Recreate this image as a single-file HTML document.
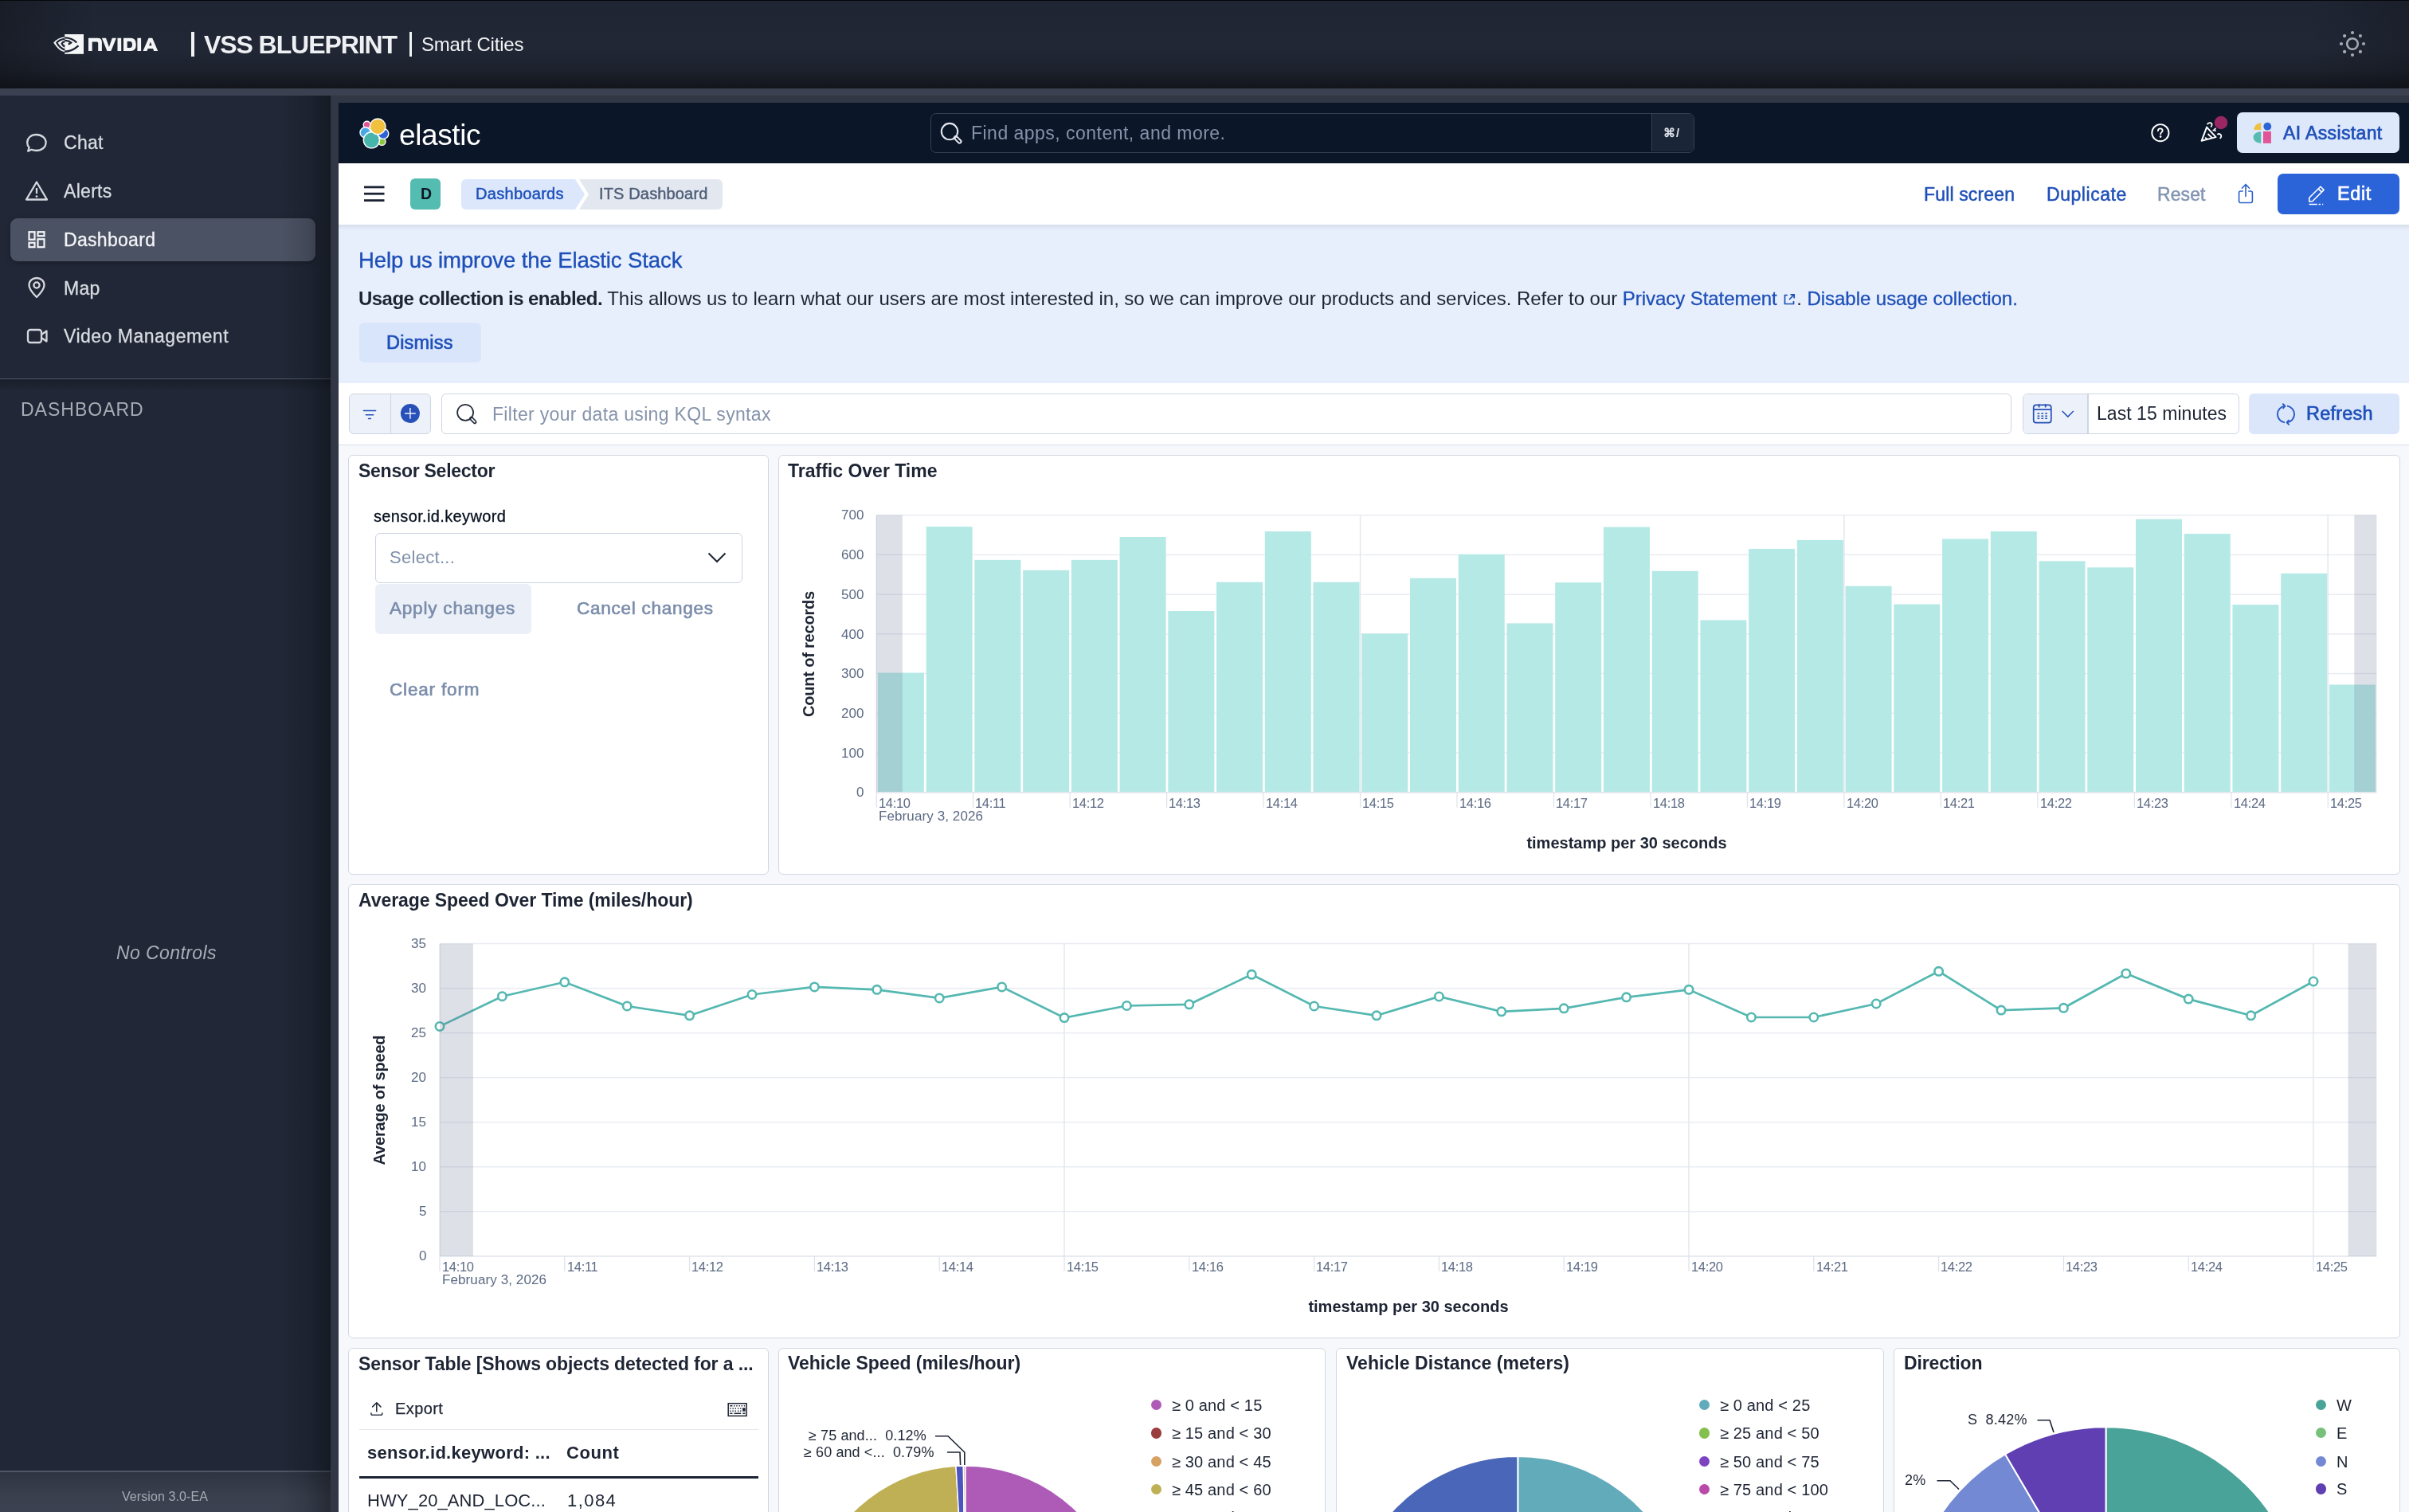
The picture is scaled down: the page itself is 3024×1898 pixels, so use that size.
<!DOCTYPE html>
<html><head><meta charset="utf-8"><title>VSS Blueprint - ITS Dashboard</title>
<style>
html,body{margin:0;padding:0;}
body{width:3024px;height:1898px;overflow:hidden;position:relative;background:#f6f8fc;font-family:"Liberation Sans",sans-serif;}
.t{position:absolute;white-space:nowrap;will-change:transform;}
.r{position:absolute;}
svg.r{overflow:visible;}
</style></head><body>
<div class="r" style="left:0.0px;top:0.0px;width:3024.0px;height:111.0px;background:linear-gradient(180deg,#1f2533 0%,#212735 55%,#1c212c 80%,#12151b 100%);"></div>
<div class="r" style="left:0.0px;top:0.0px;width:3024.0px;height:1.2px;background:#050608;"></div>
<div class="r" style="left:0.0px;top:0.0px;width:120.0px;height:111.0px;background:linear-gradient(90deg,rgba(10,12,16,0.35),rgba(10,12,16,0));"></div>
<svg class="r" style="left:60px;top:35px;" width="145" height="40" viewBox="0 0 145 40">
      <path d="M7.2 18.4 C11 14 16 11.8 21.2 11.5 V30 C16 29.8 11 24.5 7.2 18.4 Z" fill="#f4f5f7"/>
      <rect x="21.2" y="8" width="23.8" height="24.8" fill="#f4f5f7"/>
      <path d="M21.2 13.8 C16 14.5 12.5 17 11.3 18.6 C12.6 21.2 16 25.8 21.2 27.6" fill="none" stroke="#1f2533" stroke-width="2.3"/>
      <path d="M21.2 17.2 C19.2 17.6 18 18.6 17.6 19.7 C18.4 21.4 19.8 22.6 21.2 23.4" fill="none" stroke="#1f2533" stroke-width="2.3"/>
      <path d="M21.2 12.3 C28 12.3 33 15 36.2 18.5" fill="none" stroke="#1f2533" stroke-width="2.3"/>
      <path d="M38.5 22.3 C33 27.2 27 29.6 21.2 29.7" fill="none" stroke="#1f2533" stroke-width="2.4"/>
      <path d="M21.2 15.9 C25 15.9 27.6 17 29.2 18.6 L25.8 20.8" fill="none" stroke="#1f2533" stroke-width="2.3"/>
      <path fill="#f4f5f7" fill-rule="evenodd" d="M51 29 V12.8 H62.6 Q67.9 12.8 67.9 18 V29 H63.2 V19 Q63.2 17.4 61.6 17.4 H55.7 V29 Z
        M67.9 12.8 H73 L76.9 24 L80.8 12.8 H85.9 L79.4 29 H74.4 Z
        M87.5 12.8 H92.2 V29 H87.5 Z
        M95 12.8 H104 Q110.8 12.8 110.8 20.9 Q110.8 29 104 29 H95 Z M99.7 16.9 V24.9 H103.3 Q106 24.9 106 20.9 Q106 16.9 103.3 16.9 Z
        M112.4 12.8 H117.1 V29 H112.4 Z
        M119.5 29 L126.6 12.8 H131.2 L138.2 29 H133.2 L132 26 H125.7 L124.5 29 Z M127.1 22.3 H130.6 L128.85 17.6 Z"/>
    </svg>
<div class="r" style="left:240.0px;top:40.0px;width:3.5px;height:31.0px;background:#f2f3f5;"></div>
<div class="t " style="left:256.0px;top:39.9px;font-size:32px;line-height:32px;font-weight:700;color:#eef0f3;letter-spacing:-1.08px;">VSS BLUEPRINT</div>
<div class="r" style="left:513.5px;top:40.0px;width:3.5px;height:31.0px;background:#f2f3f5;"></div>
<div class="t " style="left:529.0px;top:44.2px;font-size:24px;line-height:24px;font-weight:400;color:#f2f3f5;letter-spacing:-0.2px;">Smart Cities</div>
<svg class="r" style="left:2930px;top:32px;" width="46" height="46" viewBox="0 0 46 46"><circle cx="23" cy="23" r="6.8" fill="none" stroke="#b9bcc4" stroke-width="2.6"/><circle cx="37.0" cy="23.0" r="2.1" fill="#b9bcc4"/><circle cx="32.9" cy="32.9" r="2.1" fill="#b9bcc4"/><circle cx="23.0" cy="37.0" r="2.1" fill="#b9bcc4"/><circle cx="13.1" cy="32.9" r="2.1" fill="#b9bcc4"/><circle cx="9.0" cy="23.0" r="2.1" fill="#b9bcc4"/><circle cx="13.1" cy="13.1" r="2.1" fill="#b9bcc4"/><circle cx="23.0" cy="9.0" r="2.1" fill="#b9bcc4"/><circle cx="32.9" cy="13.1" r="2.1" fill="#b9bcc4"/></svg>
<div class="r" style="left:2900.0px;top:0.0px;width:124.0px;height:111.0px;background:linear-gradient(90deg,rgba(10,12,16,0),rgba(10,12,16,0.25));"></div>
<div class="r" style="left:0.0px;top:111.0px;width:3024.0px;height:9.0px;background:#3b4150;"></div>
<div class="r" style="left:415.0px;top:120.0px;width:2609.0px;height:9.0px;background:#313744;"></div>
<div class="r" style="left:415.0px;top:120.0px;width:10.0px;height:1778.0px;background:#313744;"></div>
<div class="r" style="left:0.0px;top:120.0px;width:415.0px;height:1778.0px;background:#212736;"></div>
<div class="r" style="left:13.0px;top:274.0px;width:383.0px;height:54.0px;background:#4b5263;border-radius:9px;box-shadow:0 2px 6px rgba(0,0,0,0.25);"></div>
<svg class="r" style="left:30px;top:164px;" width="32" height="30" viewBox="0 0 32 30"><path d="M5.2 25.8 L6.6 21.2 C5 19.4 4.2 17.2 4.2 15 C4.2 9 9.2 5 15.6 5 C22 5 27.6 9 27.6 15 C27.6 21 22 25 15.6 25 C13.4 25 11.4 24.6 9.6 23.8 Z" fill="none" stroke="#d5d8de" stroke-width="2.3" stroke-linejoin="round"/></svg>
<div class="t " style="left:80.0px;top:167.8px;font-size:23px;line-height:23px;font-weight:400;color:#d9dce2;letter-spacing:0.3px;-webkit-text-stroke:0.3px #d9dce2;">Chat</div>
<svg class="r" style="left:30px;top:224px;" width="32" height="30" viewBox="0 0 32 30"><path d="M16 4.5 L29 26.5 H3 Z" fill="none" stroke="#d5d8de" stroke-width="2.3" stroke-linejoin="round"/><line x1="16" y1="12" x2="16" y2="19" stroke="#d5d8de" stroke-width="2.3"/><circle cx="16" cy="22.6" r="1.4" fill="#d5d8de"/></svg>
<div class="t " style="left:80.0px;top:228.5px;font-size:23px;line-height:23px;font-weight:400;color:#d9dce2;letter-spacing:0.3px;-webkit-text-stroke:0.3px #d9dce2;">Alerts</div>
<svg class="r" style="left:32px;top:287px;" width="28" height="28" viewBox="0 0 28 28"><rect x="4.5" y="4.2" width="7" height="9.5" fill="none" stroke="#f4f5f7" stroke-width="2.2"/><rect x="15.5" y="4.2" width="8" height="5" fill="none" stroke="#f4f5f7" stroke-width="2.2"/><rect x="4.5" y="17.7" width="7" height="5.5" fill="none" stroke="#f4f5f7" stroke-width="2.2"/><rect x="15.5" y="13.2" width="8" height="10" fill="none" stroke="#f4f5f7" stroke-width="2.2"/></svg>
<div class="t " style="left:80.0px;top:289.5px;font-size:23px;line-height:23px;font-weight:400;color:#f4f5f7;letter-spacing:0.3px;-webkit-text-stroke:0.3px #f4f5f7;">Dashboard</div>
<svg class="r" style="left:32px;top:346px;" width="28" height="30" viewBox="0 0 28 30"><path d="M14 27 C8.5 21.5 4.5 16.5 4.5 12 C4.5 6.5 8.8 3 14 3 C19.2 3 23.5 6.5 23.5 12 C23.5 16.5 19.5 21.5 14 27 Z" fill="none" stroke="#d5d8de" stroke-width="2.3" stroke-linejoin="round"/><circle cx="14" cy="12" r="3.6" fill="none" stroke="#d5d8de" stroke-width="2.3"/></svg>
<div class="t " style="left:80.0px;top:350.5px;font-size:23px;line-height:23px;font-weight:400;color:#d9dce2;letter-spacing:0.3px;-webkit-text-stroke:0.3px #d9dce2;">Map</div>
<svg class="r" style="left:30px;top:408px;" width="34" height="28" viewBox="0 0 34 28"><rect x="5" y="6" width="17" height="16" rx="3" fill="none" stroke="#d5d8de" stroke-width="2.3"/><path d="M22 12 L28.5 7.5 V20.5 L22 16" fill="none" stroke="#d5d8de" stroke-width="2.3" stroke-linejoin="round"/></svg>
<div class="t " style="left:80.0px;top:410.5px;font-size:23px;line-height:23px;font-weight:400;color:#d9dce2;letter-spacing:0.5px;-webkit-text-stroke:0.3px #d9dce2;">Video Management</div>
<div class="r" style="left:0.0px;top:475.0px;width:415.0px;height:1.2px;background:#4a505d;"></div>
<div class="r" style="left:0.0px;top:477.0px;width:415.0px;height:14.0px;background:linear-gradient(180deg,rgba(0,0,0,0.22),rgba(0,0,0,0));"></div>
<div class="t " style="left:26.0px;top:502.5px;font-size:23px;line-height:23px;font-weight:400;color:#a8acb5;letter-spacing:1px;">DASHBOARD</div>
<div class="t" style="left:-291.0px;width:1000px;text-align:center;top:1184.5px;font-size:23px;line-height:23px;font-weight:400;color:#a9aeb8;font-style:italic;letter-spacing:0.4px;">No Controls</div>
<div class="r" style="left:0.0px;top:1846.0px;width:415.0px;height:2.0px;background:#4f5664;"></div>
<div class="r" style="left:0.0px;top:1848.0px;width:415.0px;height:50.0px;background:linear-gradient(180deg,#2e3441 0%,#3a404e 60%,#3b4150 100%);"></div>
<div class="t" style="left:-293.0px;width:1000px;text-align:center;top:1870.5px;font-size:16px;line-height:16px;font-weight:400;color:#a6abb4;letter-spacing:0.1px;">Version 3.0-EA</div>
<div class="r" style="left:355.0px;top:120.0px;width:60.0px;height:1778.0px;background:linear-gradient(90deg,rgba(5,7,10,0) 0%,rgba(5,7,10,0.12) 50%,rgba(5,7,10,0.38) 100%);z-index:1;"></div>
<div class="r" style="left:425.0px;top:129.0px;width:2599.0px;height:76.0px;background:#0b1628;"></div>
<svg class="r" style="left:448px;top:145px;" width="44" height="44" viewBox="0 0 44 44">
      <g stroke="#fff" stroke-width="1.4">
      <circle cx="31.4" cy="32.8" r="4.6" fill="#8fc641"/>
      <circle cx="33.2" cy="22.8" r="6.6" fill="#2f64d5"/>
      <circle cx="12.6" cy="11.6" r="4.4" fill="#e35497"/>
      <circle cx="10.6" cy="21.4" r="6.6" fill="#49a7e6"/>
      <circle cx="18.4" cy="30.8" r="10.1" fill="#48b5ad"/>
      <circle cx="26.2" cy="13.8" r="9.8" fill="#f0c03f"/>
      </g>
    </svg>
<div class="t " style="left:501.0px;top:150.7px;font-size:37px;line-height:37px;font-weight:400;color:#ffffff;letter-spacing:-0.4px;">elastic</div>
<div class="r" style="left:1168.0px;top:141.5px;width:959.0px;height:50.0px;background:#0b1628;border:1.5px solid #343f53;border-radius:7px;box-sizing:border-box;"></div>
<div class="r" style="left:2073.0px;top:143.0px;width:53.0px;height:47.0px;background:#1a2538;border-left:1.5px solid #343f53;border-radius:0 6px 6px 0;box-sizing:border-box;"></div>
<svg class="r" style="left:1178px;top:152px;" width="32" height="32" viewBox="0 0 32 32"><circle cx="14" cy="13.1" r="10.2" fill="none" stroke="#e3e7ee" stroke-width="2.1"/><path d="M21.9 21 L26.5 25.6" stroke="#e3e7ee" stroke-width="6" stroke-linecap="round"/><path d="M22.6 21.7 L26.5 25.6" stroke="#0b1628" stroke-width="2" stroke-linecap="round"/></svg>
<div class="t " style="left:1219.0px;top:155.5px;font-size:23px;line-height:23px;font-weight:400;color:#8592aa;letter-spacing:0.48px;">Find apps, content, and more.</div>
<div class="t " style="left:2088.0px;top:159.3px;font-size:15px;line-height:15px;font-weight:700;color:#dfe3ea;letter-spacing:1px;">⌘/</div>
<svg class="r" style="left:2696px;top:151px;" width="32" height="32" viewBox="0 0 32 32"><circle cx="15.9" cy="15.7" r="10.6" fill="none" stroke="#fff" stroke-width="1.9"/><path d="M12.9 13.3 C12.9 11.4 14.2 10.3 15.8 10.3 C17.5 10.3 18.7 11.4 18.7 13 C18.7 14.8 16.1 15.2 16.1 17.6" fill="none" stroke="#fff" stroke-width="1.8" stroke-linecap="round"/><circle cx="16.1" cy="20.6" r="1.3" fill="#fff"/></svg>
<svg class="r" style="left:2758px;top:146px;" width="42" height="40" viewBox="0 0 42 40">
      <path d="M5.6 30.8 L12.1 13.6 L23.6 26.1 Z" fill="none" stroke="#fff" stroke-width="2" stroke-linejoin="round"/>
      <path d="M13.4 22 L18.8 27 M10.2 26.6 L13.2 29.2" stroke="#fff" stroke-width="1.8"/>
      <path d="M12.8 10.3 C13.8 7.6 18.4 7.4 18.6 10.4 C18.7 11.9 17.8 12.9 17.3 13.5" fill="none" stroke="#fff" stroke-width="1.8"/>
      <path d="M23.6 14.8 L20.6 17.6 L23.9 18.2" fill="none" stroke="#fff" stroke-width="1.6"/>
      <path d="M25.3 22.9 C27.4 21.1 30.6 22.4 30.3 25.1 C30.1 26.5 29.2 27.4 28.6 27.9" fill="none" stroke="#fff" stroke-width="1.8"/>
    </svg>
<svg class="r" style="left:2778px;top:144px;" width="20" height="20" viewBox="0 0 20 20"><circle cx="10" cy="10" r="8.3" fill="#9b2664"/></svg>
<div class="r" style="left:2808.0px;top:141.0px;width:204.0px;height:51.0px;background:#dde8fb;border-radius:7px;"></div>
<svg class="r" style="left:2826px;top:152px;" width="28" height="30" viewBox="0 0 28 30">
      <path d="M3.4 11 A8.8 8.8 0 0 1 12.2 2.2 V11 Z" fill="#f0c03f"/>
      <path d="M12.2 13.2 V27.8 A9.7 7.3 0 0 1 12.2 13.2 Z" fill="#56bbb0"/>
      <rect x="15" y="13" width="9.9" height="14.9" fill="#e35497"/>
      <circle cx="20.3" cy="6.7" r="4.9" fill="#2f64d5"/>
    </svg>
<div class="t " style="left:2865.5px;top:156.1px;font-size:23px;line-height:23px;font-weight:400;color:#1f4fb8;-webkit-text-stroke:0.7px #1f4fb8;letter-spacing:0.37px;">AI Assistant</div>
<div class="r" style="left:425.0px;top:205.0px;width:2599.0px;height:77.0px;background:#ffffff;"></div>
<svg class="r" style="left:452px;top:228px;" width="36" height="30" viewBox="0 0 36 30"><rect x="5" y="5.5" width="25.5" height="2.8" fill="#1b2333"/><rect x="5" y="13.8" width="25.5" height="2.8" fill="#1b2333"/><rect x="5" y="22.2" width="25.5" height="2.8" fill="#1b2333"/></svg>
<div class="r" style="left:515.0px;top:224.0px;width:38.0px;height:39.0px;background:#54bcb0;border-radius:6px;"></div>
<div class="t " style="left:527.5px;top:234.0px;font-size:19.5px;line-height:19.5px;font-weight:700;color:#0b1628;">D</div>
<svg class="r" style="left:579px;top:225px;" width="330" height="38" viewBox="0 0 330 38">
      <path d="M6 0 H143 L155 19 L143 38 H6 A6 6 0 0 1 0 32 V6 A6 6 0 0 1 6 0 Z" fill="#dce7fb"/>
      <path d="M148 0 H322 A6 6 0 0 1 328 6 V32 A6 6 0 0 1 322 38 H148 L160 19 Z" fill="#e3e8f0"/>
    </svg>
<div class="t " style="left:597.0px;top:232.9px;font-size:20px;line-height:20px;font-weight:400;color:#1c50b9;-webkit-text-stroke:0.45px #1c50b9;letter-spacing:0.3px;">Dashboards</div>
<div class="t " style="left:752.0px;top:232.9px;font-size:20px;line-height:20px;font-weight:400;color:#4e5d78;-webkit-text-stroke:0.45px #4e5d78;letter-spacing:0.15px;">ITS Dashboard</div>
<div class="t " style="left:2415.0px;top:232.5px;font-size:23px;line-height:23px;font-weight:400;color:#1f50b8;-webkit-text-stroke:0.5px #1f50b8;letter-spacing:0.15px;">Full screen</div>
<div class="t " style="left:2569.0px;top:232.5px;font-size:23px;line-height:23px;font-weight:400;color:#1f50b8;-webkit-text-stroke:0.5px #1f50b8;letter-spacing:0.55px;">Duplicate</div>
<div class="t " style="left:2708.0px;top:232.5px;font-size:23px;line-height:23px;font-weight:400;color:#8294b2;-webkit-text-stroke:0.5px #8294b2;letter-spacing:0.1px;">Reset</div>
<svg class="r" style="left:2806px;top:228px;" width="26" height="30" viewBox="0 0 26 30"><path d="M13 3.5 V18.5 M8.4 8.2 L13 3.5 L17.6 8.2" fill="none" stroke="#2a5fc9" stroke-width="1.6" stroke-linecap="round" stroke-linejoin="round"/><path d="M9.8 12 H6.6 A2 2 0 0 0 4.6 14 V24.5 A2 2 0 0 0 6.6 26.5 H19.4 A2 2 0 0 0 21.4 24.5 V14 A2 2 0 0 0 19.4 12 H16.2" fill="none" stroke="#2a5fc9" stroke-width="1.6"/></svg>
<div class="r" style="left:2859.0px;top:218.0px;width:153.0px;height:51.0px;background:#2b64d8;border-radius:7px;"></div>
<svg class="r" style="left:2894px;top:229px;" width="30" height="32" viewBox="0 0 30 32"><path d="M4.8 24 V19.3 L18.9 5.2 L23.1 9.4 L9 23.5 Z M16.2 7.9 L20.4 12.1" fill="none" stroke="#fff" stroke-width="1.6" stroke-linejoin="round"/><path d="M4.6 27.5 H14.8 M16.6 27.5 H19 M21 27.5 H22.2" stroke="#fff" stroke-width="1.6"/></svg>
<div class="t " style="left:2933.5px;top:232.1px;font-size:23.5px;line-height:23.5px;font-weight:400;color:#ffffff;-webkit-text-stroke:0.7px #ffffff;letter-spacing:0.6px;">Edit</div>
<div class="r" style="left:425.0px;top:282.0px;width:2599.0px;height:7.0px;background:linear-gradient(180deg,rgba(40,50,70,0.09),rgba(40,50,70,0));z-index:2;"></div>
<div class="r" style="left:425.0px;top:282.0px;width:2599.0px;height:199.0px;background:#e8effc;"></div>
<div class="t " style="left:449.5px;top:312.9px;font-size:27.5px;line-height:27.5px;font-weight:400;color:#1d4fb8;-webkit-text-stroke:0.35px #1d4fb8;letter-spacing:-0.1px;">Help us improve the Elastic Stack</div>
<div class="t " style="left:449.5px;top:363.2px;font-size:24px;line-height:24px;font-weight:400;color:#1d2433;white-space:nowrap;letter-spacing:-0.05px;"><b style="letter-spacing:-0.55px">Usage collection is enabled.</b> This allows us to learn what our users are most interested in, so we can improve our products and services. Refer to our <span style="color:#1d4fb8;-webkit-text-stroke:0.3px #1d4fb8">Privacy Statement</span> <svg width="18" height="18" viewBox="0 0 18 18" style="vertical-align:-2px"><path d="M7 3.5 H3.5 V14.5 H14.5 V11" fill="none" stroke="#1d4fb8" stroke-width="1.7"/><path d="M9 9 L15 3 M10.5 2.8 H15.2 V7.5" fill="none" stroke="#1d4fb8" stroke-width="1.7"/></svg>. <span style="color:#1d4fb8;-webkit-text-stroke:0.3px #1d4fb8">Disable usage collection.</span></div>
<div class="r" style="left:451.0px;top:404.5px;width:153.0px;height:50.0px;background:#d9e5fb;border-radius:6px;"></div>
<div class="t " style="left:484.6px;top:418.7px;font-size:23.5px;line-height:23.5px;font-weight:400;color:#1d4fb8;-webkit-text-stroke:0.65px #1d4fb8;letter-spacing:0.2px;">Dismiss</div>
<div class="r" style="left:425.0px;top:481.0px;width:2599.0px;height:77.0px;background:#ffffff;"></div>
<div class="r" style="left:425.0px;top:557.5px;width:2599.0px;height:1.5px;background:#d8dee8;"></div>
<div class="r" style="left:438.0px;top:494.0px;width:103.0px;height:51.0px;background:#edf1f9;border:1.5px solid #cdd5e1;border-radius:6px;box-sizing:border-box;"></div>
<div class="r" style="left:489.5px;top:495.0px;width:1.5px;height:49.0px;background:#cdd5e1;"></div>
<svg class="r" style="left:452px;top:506px;" width="26" height="26" viewBox="0 0 26 26"><path d="M4.4 9.6 H19.6 M7.3 14.7 H16.7 M10.5 19.4 H13.4" stroke="#2750b9" stroke-width="1.5" stroke-linecap="round"/></svg>
<svg class="r" style="left:496px;top:502px;" width="36" height="36" viewBox="0 0 36 36"><circle cx="18.9" cy="16.9" r="12" fill="#2750b9"/><path d="M18.9 10 V23.8 M12 16.9 H25.8" stroke="#e8eefb" stroke-width="1.5"/></svg>
<div class="r" style="left:554.0px;top:494.0px;width:1970.5px;height:51.0px;background:#ffffff;border:1.5px solid #cdd5e1;border-radius:6px;box-sizing:border-box;"></div>
<svg class="r" style="left:568px;top:505px;" width="36" height="36" viewBox="0 0 36 36"><circle cx="16.1" cy="12.8" r="10" fill="none" stroke="#1f2636" stroke-width="1.7"/><path d="M23.6 20.3 L28 24.7" stroke="#1f2636" stroke-width="5" stroke-linecap="round"/><path d="M24.2 20.9 L28 24.7" stroke="#fff" stroke-width="1.8" stroke-linecap="round"/></svg>
<div class="t " style="left:617.5px;top:508.5px;font-size:23px;line-height:23px;font-weight:400;color:#8593aa;letter-spacing:0.32px;">Filter your data using KQL syntax</div>
<div class="r" style="left:2538.5px;top:494.0px;width:272.0px;height:51.0px;background:#ffffff;border:1.5px solid #cdd5e1;border-radius:6px;box-sizing:border-box;"></div>
<div class="r" style="left:2539.5px;top:495.2px;width:81.0px;height:48.6px;background:#edf1f9;border-radius:5px 0 0 5px;"></div>
<div class="r" style="left:2620.0px;top:495.0px;width:1.5px;height:49.0px;background:#cdd5e1;"></div>
<svg class="r" style="left:2548px;top:505px;" width="60" height="30" viewBox="0 0 60 30">
      <rect x="4.7" y="3.4" width="22.1" height="22.2" rx="3.2" fill="none" stroke="#2550b9" stroke-width="1.7"/>
      <path d="M4.7 9.2 H26.8 M11.6 2.2 V6.6 M19.7 2.2 V6.6" stroke="#2550b9" stroke-width="1.7"/>
      <path d="M9.5 14 H12.3 M14.4 14 H17.2 M19.2 14 H22.0 M9.5 17.2 H12.3 M14.4 17.2 H17.2 M19.2 17.2 H22.0 M9.5 20.3 H12.3 M14.4 20.3 H17.2 M19.2 20.3 H22.0 " stroke="#2550b9" stroke-width="1.6"/>
      <path d="M40.7 11 L47.8 18.1 L54.8 11" fill="none" stroke="#2550b9" stroke-width="1.5"/>
    </svg>
<div class="t " style="left:2632.0px;top:508.0px;font-size:23px;line-height:23px;font-weight:400;color:#1d2433;letter-spacing:0.05px;">Last 15 minutes</div>
<div class="r" style="left:2823.0px;top:494.0px;width:189.0px;height:51.0px;background:#dbe6fb;border-radius:6px;"></div>
<svg class="r" style="left:2853px;top:504px;" width="34" height="34" viewBox="0 0 34 34"><path d="M15 5.6 A10.5 10.5 0 0 0 15 26.4" fill="none" stroke="#2659c5" stroke-width="1.9"/><path d="M12.3 2.6 L15.4 5.6 L12.6 8.8" fill="none" stroke="#2659c5" stroke-width="1.9" stroke-linejoin="round"/><path d="M18 26.4 A10.5 10.5 0 0 0 18 5.6" fill="none" stroke="#2659c5" stroke-width="1.9"/><path d="M20.7 29.4 L17.6 26.4 L20.4 23.2" fill="none" stroke="#2659c5" stroke-width="1.9" stroke-linejoin="round"/></svg>
<div class="t " style="left:2894.6px;top:507.7px;font-size:23.5px;line-height:23.5px;font-weight:400;color:#1d4fb8;-webkit-text-stroke:0.65px #1d4fb8;letter-spacing:0.2px;">Refresh</div>
<div class="r" style="left:425.0px;top:559.0px;width:2599.0px;height:1339.0px;background:#f6f8fc;"></div>
<div class="r" style="left:437.0px;top:571.0px;width:528.0px;height:527.0px;background:#ffffff;border:1.2px solid #d0d7e3;border-radius:6px;box-sizing:border-box;"></div>
<div class="t " style="left:450.0px;top:580.3px;font-size:23px;line-height:23px;font-weight:700;color:#1d2433;letter-spacing:-0.26px;">Sensor Selector</div>
<div class="t " style="left:469.0px;top:637.6px;font-size:20px;line-height:20px;font-weight:400;color:#07101f;-webkit-text-stroke:0.3px #07101f;letter-spacing:0.36px;">sensor.id.keyword</div>
<div class="r" style="left:470.5px;top:668.5px;width:461.5px;height:63.0px;background:#ffffff;border:1.5px solid #cbd4e1;border-radius:6px;box-sizing:border-box;"></div>
<div class="t " style="left:489.0px;top:689.4px;font-size:22px;line-height:22px;font-weight:400;color:#8191ab;letter-spacing:0.3px;">Select...</div>
<svg class="r" style="left:884px;top:688px;" width="32" height="24" viewBox="0 0 32 24"><path d="M5.5 6.5 L16 17 L26.5 6.5" fill="none" stroke="#1d2433" stroke-width="2"/></svg>
<div class="r" style="left:470.5px;top:733.0px;width:196.5px;height:62.5px;background:#ebf0f8;border-radius:6px;"></div>
<div class="t " style="left:489.0px;top:752.6px;font-size:22.5px;line-height:22.5px;font-weight:400;color:#7b8dab;-webkit-text-stroke:0.65px #7b8dab;letter-spacing:0.8px;">Apply changes</div>
<div class="t " style="left:724.0px;top:752.6px;font-size:22.5px;line-height:22.5px;font-weight:400;color:#7b8dab;-webkit-text-stroke:0.65px #7b8dab;letter-spacing:0.74px;">Cancel changes</div>
<div class="t " style="left:489.0px;top:855.2px;font-size:22.5px;line-height:22.5px;font-weight:400;color:#7b8dab;-webkit-text-stroke:0.65px #7b8dab;letter-spacing:0.83px;">Clear form</div>
<div class="r" style="left:976.5px;top:571.0px;width:2036.0px;height:527.0px;background:#ffffff;border:1.2px solid #d0d7e3;border-radius:6px;box-sizing:border-box;"></div>
<div class="t " style="left:989.0px;top:580.3px;font-size:23px;line-height:23px;font-weight:700;color:#1d2433;letter-spacing:0px;">Traffic Over Time</div>
<svg class="r" style="left:0;top:0" width="3024" height="1898"><rect x="1100.2" y="993.95" width="1883.2" height="1.5" fill="#e9ecf2"/><rect x="1100.2" y="944.24" width="1883.2" height="1.5" fill="#e9ecf2"/><rect x="1100.2" y="894.52" width="1883.2" height="1.5" fill="#e9ecf2"/><rect x="1100.2" y="844.81" width="1883.2" height="1.5" fill="#e9ecf2"/><rect x="1100.2" y="795.09" width="1883.2" height="1.5" fill="#e9ecf2"/><rect x="1100.2" y="745.38" width="1883.2" height="1.5" fill="#e9ecf2"/><rect x="1100.2" y="695.67" width="1883.2" height="1.5" fill="#e9ecf2"/><rect x="1100.2" y="645.95" width="1883.2" height="1.5" fill="#e9ecf2"/><rect x="1099.45" y="646.7" width="1.5" height="348.0" fill="#e3e7ee"/><rect x="1706.80" y="646.7" width="1.5" height="348.0" fill="#e3e7ee"/><rect x="2314.15" y="646.7" width="1.5" height="348.0" fill="#e3e7ee"/><rect x="2921.50" y="646.7" width="1.5" height="348.0" fill="#e3e7ee"/><rect x="1101.90" y="844.56" width="58" height="150.14" fill="#b5e9e6"/><rect x="1162.63" y="661.12" width="58" height="333.58" fill="#b5e9e6"/><rect x="1223.37" y="702.88" width="58" height="291.82" fill="#b5e9e6"/><rect x="1284.11" y="715.80" width="58" height="278.90" fill="#b5e9e6"/><rect x="1344.84" y="702.88" width="58" height="291.82" fill="#b5e9e6"/><rect x="1405.58" y="674.04" width="58" height="320.66" fill="#b5e9e6"/><rect x="1466.31" y="767.01" width="58" height="227.69" fill="#b5e9e6"/><rect x="1527.05" y="730.72" width="58" height="263.98" fill="#b5e9e6"/><rect x="1587.78" y="667.08" width="58" height="327.62" fill="#b5e9e6"/><rect x="1648.52" y="730.72" width="58" height="263.98" fill="#b5e9e6"/><rect x="1709.25" y="795.35" width="58" height="199.35" fill="#b5e9e6"/><rect x="1769.99" y="725.75" width="58" height="268.95" fill="#b5e9e6"/><rect x="1830.72" y="695.92" width="58" height="298.78" fill="#b5e9e6"/><rect x="1891.46" y="782.42" width="58" height="212.28" fill="#b5e9e6"/><rect x="1952.19" y="731.22" width="58" height="263.48" fill="#b5e9e6"/><rect x="2012.92" y="661.62" width="58" height="333.08" fill="#b5e9e6"/><rect x="2073.66" y="716.80" width="58" height="277.90" fill="#b5e9e6"/><rect x="2134.39" y="778.44" width="58" height="216.26" fill="#b5e9e6"/><rect x="2195.13" y="688.96" width="58" height="305.74" fill="#b5e9e6"/><rect x="2255.86" y="678.02" width="58" height="316.68" fill="#b5e9e6"/><rect x="2316.60" y="735.69" width="58" height="259.01" fill="#b5e9e6"/><rect x="2377.34" y="758.56" width="58" height="236.14" fill="#b5e9e6"/><rect x="2438.07" y="676.53" width="58" height="318.17" fill="#b5e9e6"/><rect x="2498.80" y="667.08" width="58" height="327.62" fill="#b5e9e6"/><rect x="2559.54" y="704.37" width="58" height="290.33" fill="#b5e9e6"/><rect x="2620.27" y="712.32" width="58" height="282.38" fill="#b5e9e6"/><rect x="2681.01" y="651.67" width="58" height="343.03" fill="#b5e9e6"/><rect x="2741.74" y="670.07" width="58" height="324.63" fill="#b5e9e6"/><rect x="2802.48" y="759.06" width="58" height="235.64" fill="#b5e9e6"/><rect x="2863.22" y="719.78" width="58" height="274.92" fill="#b5e9e6"/><rect x="2923.95" y="859.48" width="58" height="135.22" fill="#b5e9e6"/><rect x="1100.2" y="646.7" width="32.6" height="348.0" fill="rgba(105,115,145,0.22)"/><rect x="2955.3" y="646.7" width="28.1" height="348.0" fill="rgba(105,115,145,0.22)"/><rect x="1100.2" y="993.95" width="1883.2" height="1.5" fill="#e3e7ee"/><rect x="1099.60" y="994.7" width="1.2" height="19" fill="#dde2ea"/><rect x="1221.07" y="994.7" width="1.2" height="19" fill="#dde2ea"/><rect x="1342.54" y="994.7" width="1.2" height="19" fill="#dde2ea"/><rect x="1464.01" y="994.7" width="1.2" height="19" fill="#dde2ea"/><rect x="1585.48" y="994.7" width="1.2" height="19" fill="#dde2ea"/><rect x="1706.95" y="994.7" width="1.2" height="19" fill="#dde2ea"/><rect x="1828.42" y="994.7" width="1.2" height="19" fill="#dde2ea"/><rect x="1949.89" y="994.7" width="1.2" height="19" fill="#dde2ea"/><rect x="2071.36" y="994.7" width="1.2" height="19" fill="#dde2ea"/><rect x="2192.83" y="994.7" width="1.2" height="19" fill="#dde2ea"/><rect x="2314.30" y="994.7" width="1.2" height="19" fill="#dde2ea"/><rect x="2435.77" y="994.7" width="1.2" height="19" fill="#dde2ea"/><rect x="2557.24" y="994.7" width="1.2" height="19" fill="#dde2ea"/><rect x="2678.71" y="994.7" width="1.2" height="19" fill="#dde2ea"/><rect x="2800.18" y="994.7" width="1.2" height="19" fill="#dde2ea"/><rect x="2921.65" y="994.7" width="1.2" height="19" fill="#dde2ea"/></svg>
<div class="t" style="right:1939.2px;top:986.3px;font-size:17px;line-height:17px;font-weight:400;color:#5c6a83;letter-spacing:0px;">0</div>
<div class="t" style="right:1939.2px;top:936.6px;font-size:17px;line-height:17px;font-weight:400;color:#5c6a83;letter-spacing:0px;">100</div>
<div class="t" style="right:1939.2px;top:886.9px;font-size:17px;line-height:17px;font-weight:400;color:#5c6a83;letter-spacing:0px;">200</div>
<div class="t" style="right:1939.2px;top:837.2px;font-size:17px;line-height:17px;font-weight:400;color:#5c6a83;letter-spacing:0px;">300</div>
<div class="t" style="right:1939.2px;top:787.5px;font-size:17px;line-height:17px;font-weight:400;color:#5c6a83;letter-spacing:0px;">400</div>
<div class="t" style="right:1939.2px;top:737.7px;font-size:17px;line-height:17px;font-weight:400;color:#5c6a83;letter-spacing:0px;">500</div>
<div class="t" style="right:1939.2px;top:688.0px;font-size:17px;line-height:17px;font-weight:400;color:#5c6a83;letter-spacing:0px;">600</div>
<div class="t" style="right:1939.2px;top:638.3px;font-size:17px;line-height:17px;font-weight:400;color:#5c6a83;letter-spacing:0px;">700</div>
<div class="t " style="left:1102.9px;top:999.9px;font-size:16.5px;line-height:16.5px;font-weight:400;color:#5c6a83;letter-spacing:-0.35px;">14:10</div>
<div class="t " style="left:1224.4px;top:999.9px;font-size:16.5px;line-height:16.5px;font-weight:400;color:#5c6a83;letter-spacing:-0.35px;">14:11</div>
<div class="t " style="left:1345.8px;top:999.9px;font-size:16.5px;line-height:16.5px;font-weight:400;color:#5c6a83;letter-spacing:-0.35px;">14:12</div>
<div class="t " style="left:1467.3px;top:999.9px;font-size:16.5px;line-height:16.5px;font-weight:400;color:#5c6a83;letter-spacing:-0.35px;">14:13</div>
<div class="t " style="left:1588.8px;top:999.9px;font-size:16.5px;line-height:16.5px;font-weight:400;color:#5c6a83;letter-spacing:-0.35px;">14:14</div>
<div class="t " style="left:1710.3px;top:999.9px;font-size:16.5px;line-height:16.5px;font-weight:400;color:#5c6a83;letter-spacing:-0.35px;">14:15</div>
<div class="t " style="left:1831.7px;top:999.9px;font-size:16.5px;line-height:16.5px;font-weight:400;color:#5c6a83;letter-spacing:-0.35px;">14:16</div>
<div class="t " style="left:1953.2px;top:999.9px;font-size:16.5px;line-height:16.5px;font-weight:400;color:#5c6a83;letter-spacing:-0.35px;">14:17</div>
<div class="t " style="left:2074.7px;top:999.9px;font-size:16.5px;line-height:16.5px;font-weight:400;color:#5c6a83;letter-spacing:-0.35px;">14:18</div>
<div class="t " style="left:2196.1px;top:999.9px;font-size:16.5px;line-height:16.5px;font-weight:400;color:#5c6a83;letter-spacing:-0.35px;">14:19</div>
<div class="t " style="left:2317.6px;top:999.9px;font-size:16.5px;line-height:16.5px;font-weight:400;color:#5c6a83;letter-spacing:-0.35px;">14:20</div>
<div class="t " style="left:2439.1px;top:999.9px;font-size:16.5px;line-height:16.5px;font-weight:400;color:#5c6a83;letter-spacing:-0.35px;">14:21</div>
<div class="t " style="left:2560.5px;top:999.9px;font-size:16.5px;line-height:16.5px;font-weight:400;color:#5c6a83;letter-spacing:-0.35px;">14:22</div>
<div class="t " style="left:2682.0px;top:999.9px;font-size:16.5px;line-height:16.5px;font-weight:400;color:#5c6a83;letter-spacing:-0.35px;">14:23</div>
<div class="t " style="left:2803.5px;top:999.9px;font-size:16.5px;line-height:16.5px;font-weight:400;color:#5c6a83;letter-spacing:-0.35px;">14:24</div>
<div class="t " style="left:2924.9px;top:999.9px;font-size:16.5px;line-height:16.5px;font-weight:400;color:#5c6a83;letter-spacing:-0.35px;">14:25</div>
<div class="t " style="left:1103.0px;top:1015.6px;font-size:17px;line-height:17px;font-weight:400;color:#5c6a83;letter-spacing:0.1px;">February 3, 2026</div>
<div class="t" style="left:1541.5px;width:1000px;text-align:center;top:1048.1px;font-size:20px;line-height:20px;font-weight:700;color:#1d2433;letter-spacing:0px;">timestamp per 30 seconds</div>
<div class="t" style="left:714.7px;top:811.0px;width:600px;text-align:center;font-size:20px;line-height:20px;font-weight:700;color:#1d2433;transform:rotate(-90deg);letter-spacing:-0.2px;">Count of records</div>
<div class="r" style="left:437.0px;top:1109.5px;width:2575.5px;height:570.0px;background:#ffffff;border:1.2px solid #d0d7e3;border-radius:6px;box-sizing:border-box;"></div>
<div class="t " style="left:450.0px;top:1118.8px;font-size:23px;line-height:23px;font-weight:700;color:#1d2433;letter-spacing:-0.06px;">Average Speed Over Time (miles/hour)</div>
<svg class="r" style="left:0;top:0" width="3024" height="1898"><rect x="552.0" y="1576.05" width="2431.3" height="1.5" fill="#e9ecf2"/><rect x="552.0" y="1520.02" width="2431.3" height="1.5" fill="#e9ecf2"/><rect x="552.0" y="1463.99" width="2431.3" height="1.5" fill="#e9ecf2"/><rect x="552.0" y="1407.96" width="2431.3" height="1.5" fill="#e9ecf2"/><rect x="552.0" y="1351.93" width="2431.3" height="1.5" fill="#e9ecf2"/><rect x="552.0" y="1295.90" width="2431.3" height="1.5" fill="#e9ecf2"/><rect x="552.0" y="1239.87" width="2431.3" height="1.5" fill="#e9ecf2"/><rect x="552.0" y="1183.84" width="2431.3" height="1.5" fill="#e9ecf2"/><rect x="551.25" y="1184.6" width="1.5" height="392.2" fill="#e3e7ee"/><rect x="1335.25" y="1184.6" width="1.5" height="392.2" fill="#e3e7ee"/><rect x="2119.25" y="1184.6" width="1.5" height="392.2" fill="#e3e7ee"/><rect x="2903.25" y="1184.6" width="1.5" height="392.2" fill="#e3e7ee"/><rect x="552.0" y="1576.05" width="2431.3" height="1.5" fill="#e3e7ee"/><rect x="551.40" y="1576.8" width="1.2" height="19" fill="#dde2ea"/><rect x="708.20" y="1576.8" width="1.2" height="19" fill="#dde2ea"/><rect x="865.00" y="1576.8" width="1.2" height="19" fill="#dde2ea"/><rect x="1021.80" y="1576.8" width="1.2" height="19" fill="#dde2ea"/><rect x="1178.60" y="1576.8" width="1.2" height="19" fill="#dde2ea"/><rect x="1335.40" y="1576.8" width="1.2" height="19" fill="#dde2ea"/><rect x="1492.20" y="1576.8" width="1.2" height="19" fill="#dde2ea"/><rect x="1649.00" y="1576.8" width="1.2" height="19" fill="#dde2ea"/><rect x="1805.80" y="1576.8" width="1.2" height="19" fill="#dde2ea"/><rect x="1962.60" y="1576.8" width="1.2" height="19" fill="#dde2ea"/><rect x="2119.40" y="1576.8" width="1.2" height="19" fill="#dde2ea"/><rect x="2276.20" y="1576.8" width="1.2" height="19" fill="#dde2ea"/><rect x="2433.00" y="1576.8" width="1.2" height="19" fill="#dde2ea"/><rect x="2589.80" y="1576.8" width="1.2" height="19" fill="#dde2ea"/><rect x="2746.60" y="1576.8" width="1.2" height="19" fill="#dde2ea"/><rect x="2903.40" y="1576.8" width="1.2" height="19" fill="#dde2ea"/><path d="M552.0 1288.4 L630.4 1250.7 L708.8 1232.8 L787.2 1263.0 L865.6 1274.8 L944.0 1248.5 L1022.4 1238.9 L1100.8 1242.3 L1179.2 1252.9 L1257.6 1238.9 L1336.0 1277.6 L1414.4 1262.5 L1492.8 1260.8 L1571.2 1223.3 L1649.6 1263.0 L1728.0 1274.8 L1806.4 1251.0 L1884.8 1269.8 L1963.2 1265.8 L2041.6 1251.8 L2120.0 1242.3 L2198.4 1277.0 L2276.8 1277.0 L2355.2 1260.0 L2433.6 1219.3 L2512.0 1268.1 L2590.4 1265.3 L2668.8 1222.1 L2747.2 1254.1 L2825.6 1274.8 L2904.0 1232.0" fill="none" stroke="#54b8b1" stroke-width="2.7"/><circle cx="552.0" cy="1288.4" r="5.2" fill="#fff" stroke="#54b8b1" stroke-width="2.6"/><circle cx="630.4" cy="1250.7" r="5.2" fill="#fff" stroke="#54b8b1" stroke-width="2.6"/><circle cx="708.8" cy="1232.8" r="5.2" fill="#fff" stroke="#54b8b1" stroke-width="2.6"/><circle cx="787.2" cy="1263.0" r="5.2" fill="#fff" stroke="#54b8b1" stroke-width="2.6"/><circle cx="865.6" cy="1274.8" r="5.2" fill="#fff" stroke="#54b8b1" stroke-width="2.6"/><circle cx="944.0" cy="1248.5" r="5.2" fill="#fff" stroke="#54b8b1" stroke-width="2.6"/><circle cx="1022.4" cy="1238.9" r="5.2" fill="#fff" stroke="#54b8b1" stroke-width="2.6"/><circle cx="1100.8" cy="1242.3" r="5.2" fill="#fff" stroke="#54b8b1" stroke-width="2.6"/><circle cx="1179.2" cy="1252.9" r="5.2" fill="#fff" stroke="#54b8b1" stroke-width="2.6"/><circle cx="1257.6" cy="1238.9" r="5.2" fill="#fff" stroke="#54b8b1" stroke-width="2.6"/><circle cx="1336.0" cy="1277.6" r="5.2" fill="#fff" stroke="#54b8b1" stroke-width="2.6"/><circle cx="1414.4" cy="1262.5" r="5.2" fill="#fff" stroke="#54b8b1" stroke-width="2.6"/><circle cx="1492.8" cy="1260.8" r="5.2" fill="#fff" stroke="#54b8b1" stroke-width="2.6"/><circle cx="1571.2" cy="1223.3" r="5.2" fill="#fff" stroke="#54b8b1" stroke-width="2.6"/><circle cx="1649.6" cy="1263.0" r="5.2" fill="#fff" stroke="#54b8b1" stroke-width="2.6"/><circle cx="1728.0" cy="1274.8" r="5.2" fill="#fff" stroke="#54b8b1" stroke-width="2.6"/><circle cx="1806.4" cy="1251.0" r="5.2" fill="#fff" stroke="#54b8b1" stroke-width="2.6"/><circle cx="1884.8" cy="1269.8" r="5.2" fill="#fff" stroke="#54b8b1" stroke-width="2.6"/><circle cx="1963.2" cy="1265.8" r="5.2" fill="#fff" stroke="#54b8b1" stroke-width="2.6"/><circle cx="2041.6" cy="1251.8" r="5.2" fill="#fff" stroke="#54b8b1" stroke-width="2.6"/><circle cx="2120.0" cy="1242.3" r="5.2" fill="#fff" stroke="#54b8b1" stroke-width="2.6"/><circle cx="2198.4" cy="1277.0" r="5.2" fill="#fff" stroke="#54b8b1" stroke-width="2.6"/><circle cx="2276.8" cy="1277.0" r="5.2" fill="#fff" stroke="#54b8b1" stroke-width="2.6"/><circle cx="2355.2" cy="1260.0" r="5.2" fill="#fff" stroke="#54b8b1" stroke-width="2.6"/><circle cx="2433.6" cy="1219.3" r="5.2" fill="#fff" stroke="#54b8b1" stroke-width="2.6"/><circle cx="2512.0" cy="1268.1" r="5.2" fill="#fff" stroke="#54b8b1" stroke-width="2.6"/><circle cx="2590.4" cy="1265.3" r="5.2" fill="#fff" stroke="#54b8b1" stroke-width="2.6"/><circle cx="2668.8" cy="1222.1" r="5.2" fill="#fff" stroke="#54b8b1" stroke-width="2.6"/><circle cx="2747.2" cy="1254.1" r="5.2" fill="#fff" stroke="#54b8b1" stroke-width="2.6"/><circle cx="2825.6" cy="1274.8" r="5.2" fill="#fff" stroke="#54b8b1" stroke-width="2.6"/><circle cx="2904.0" cy="1232.0" r="5.2" fill="#fff" stroke="#54b8b1" stroke-width="2.6"/><rect x="552.0" y="1184.6" width="41.9" height="392.2" fill="rgba(105,115,145,0.22)"/><rect x="2947.6" y="1184.6" width="35.7" height="392.2" fill="rgba(105,115,145,0.22)"/></svg>
<div class="t" style="right:2488.7px;top:1568.4px;font-size:17px;line-height:17px;font-weight:400;color:#5c6a83;letter-spacing:0px;">0</div>
<div class="t" style="right:2488.7px;top:1512.4px;font-size:17px;line-height:17px;font-weight:400;color:#5c6a83;letter-spacing:0px;">5</div>
<div class="t" style="right:2488.7px;top:1456.3px;font-size:17px;line-height:17px;font-weight:400;color:#5c6a83;letter-spacing:0px;">10</div>
<div class="t" style="right:2488.7px;top:1400.3px;font-size:17px;line-height:17px;font-weight:400;color:#5c6a83;letter-spacing:0px;">15</div>
<div class="t" style="right:2488.7px;top:1344.3px;font-size:17px;line-height:17px;font-weight:400;color:#5c6a83;letter-spacing:0px;">20</div>
<div class="t" style="right:2488.7px;top:1288.3px;font-size:17px;line-height:17px;font-weight:400;color:#5c6a83;letter-spacing:0px;">25</div>
<div class="t" style="right:2488.7px;top:1232.2px;font-size:17px;line-height:17px;font-weight:400;color:#5c6a83;letter-spacing:0px;">30</div>
<div class="t" style="right:2488.7px;top:1176.2px;font-size:17px;line-height:17px;font-weight:400;color:#5c6a83;letter-spacing:0px;">35</div>
<div class="t " style="left:554.7px;top:1582.2px;font-size:16.5px;line-height:16.5px;font-weight:400;color:#5c6a83;letter-spacing:-0.35px;">14:10</div>
<div class="t " style="left:711.5px;top:1582.2px;font-size:16.5px;line-height:16.5px;font-weight:400;color:#5c6a83;letter-spacing:-0.35px;">14:11</div>
<div class="t " style="left:868.3px;top:1582.2px;font-size:16.5px;line-height:16.5px;font-weight:400;color:#5c6a83;letter-spacing:-0.35px;">14:12</div>
<div class="t " style="left:1025.1px;top:1582.2px;font-size:16.5px;line-height:16.5px;font-weight:400;color:#5c6a83;letter-spacing:-0.35px;">14:13</div>
<div class="t " style="left:1181.9px;top:1582.2px;font-size:16.5px;line-height:16.5px;font-weight:400;color:#5c6a83;letter-spacing:-0.35px;">14:14</div>
<div class="t " style="left:1338.7px;top:1582.2px;font-size:16.5px;line-height:16.5px;font-weight:400;color:#5c6a83;letter-spacing:-0.35px;">14:15</div>
<div class="t " style="left:1495.5px;top:1582.2px;font-size:16.5px;line-height:16.5px;font-weight:400;color:#5c6a83;letter-spacing:-0.35px;">14:16</div>
<div class="t " style="left:1652.3px;top:1582.2px;font-size:16.5px;line-height:16.5px;font-weight:400;color:#5c6a83;letter-spacing:-0.35px;">14:17</div>
<div class="t " style="left:1809.1px;top:1582.2px;font-size:16.5px;line-height:16.5px;font-weight:400;color:#5c6a83;letter-spacing:-0.35px;">14:18</div>
<div class="t " style="left:1965.9px;top:1582.2px;font-size:16.5px;line-height:16.5px;font-weight:400;color:#5c6a83;letter-spacing:-0.35px;">14:19</div>
<div class="t " style="left:2122.7px;top:1582.2px;font-size:16.5px;line-height:16.5px;font-weight:400;color:#5c6a83;letter-spacing:-0.35px;">14:20</div>
<div class="t " style="left:2279.5px;top:1582.2px;font-size:16.5px;line-height:16.5px;font-weight:400;color:#5c6a83;letter-spacing:-0.35px;">14:21</div>
<div class="t " style="left:2436.3px;top:1582.2px;font-size:16.5px;line-height:16.5px;font-weight:400;color:#5c6a83;letter-spacing:-0.35px;">14:22</div>
<div class="t " style="left:2593.1px;top:1582.2px;font-size:16.5px;line-height:16.5px;font-weight:400;color:#5c6a83;letter-spacing:-0.35px;">14:23</div>
<div class="t " style="left:2749.9px;top:1582.2px;font-size:16.5px;line-height:16.5px;font-weight:400;color:#5c6a83;letter-spacing:-0.35px;">14:24</div>
<div class="t " style="left:2906.7px;top:1582.2px;font-size:16.5px;line-height:16.5px;font-weight:400;color:#5c6a83;letter-spacing:-0.35px;">14:25</div>
<div class="t " style="left:555.0px;top:1597.7px;font-size:17px;line-height:17px;font-weight:400;color:#5c6a83;letter-spacing:0.1px;">February 3, 2026</div>
<div class="t" style="left:1267.6px;width:1000px;text-align:center;top:1629.6px;font-size:20px;line-height:20px;font-weight:700;color:#1d2433;">timestamp per 30 seconds</div>
<div class="t" style="left:175.9px;top:1371.0px;width:600px;text-align:center;font-size:20px;line-height:20px;font-weight:700;color:#1d2433;transform:rotate(-90deg);letter-spacing:-0.2px;">Average of speed</div>
<div class="r" style="left:437.0px;top:1691.5px;width:528.0px;height:238.5px;background:#ffffff;border:1.2px solid #d0d7e3;border-radius:6px;box-sizing:border-box;"></div>
<div class="t " style="left:450.0px;top:1701.1px;font-size:23px;line-height:23px;font-weight:700;color:#1d2433;letter-spacing:-0.11px;">Sensor Table [Shows objects detected for a ...</div>
<svg class="r" style="left:460px;top:1756px;" width="26" height="26" viewBox="0 0 26 26"><path d="M12.8 5 V15.8 M7.7 9.9 L12.8 4.8 L17.9 9.9" fill="none" stroke="#1d2433" stroke-width="1.5" stroke-linecap="round" stroke-linejoin="round"/><path d="M5.9 17.2 V18.4 Q5.9 20.2 7.7 20.2 H18 Q19.8 20.2 19.8 18.4 V17.2" fill="none" stroke="#3a4254" stroke-width="1.6"/></svg>
<div class="t " style="left:495.5px;top:1757.9px;font-size:20px;line-height:20px;font-weight:400;color:#1d2433;-webkit-text-stroke:0.25px #1d2433;letter-spacing:0.4px;">Export</div>
<svg class="r" style="left:911px;top:1758px;" width="30" height="24" viewBox="0 0 30 24"><rect x="3.2" y="3.7" width="22.9" height="15.7" fill="none" stroke="#1d2433" stroke-width="1.5"/><path d="M5.3 6.7 H8.4 M10.0 6.7 H11.4 M13.2 6.7 H14.6 M16.5 6.7 H17.9 M19.6 6.7 H21.0 M22.8 6.7 H24.2 M5.2 10.0 H6.6 M8.4 10.0 H9.8 M11.6 10.0 H13.0 M14.9 10.0 H16.3 M18.1 10.0 H19.5 M5.2 13.2 H6.6 M8.4 13.2 H9.8 M11.6 13.2 H13.0 M14.9 13.2 H16.3 M18.1 13.2 H19.5 M5.3 16.3 H8.4 M10.4 16.3 H19.2 M21.3 16.3 H24.4" stroke="#1d2433" stroke-width="1.6"/><rect x="21.1" y="9.2" width="3.5" height="4.5" fill="#1d2433"/></svg>
<div class="r" style="left:450.5px;top:1794.0px;width:501.0px;height:1.3px;background:#e3e7ee;"></div>
<div class="t " style="left:460.5px;top:1813.4px;font-size:22px;line-height:22px;font-weight:700;color:#1d2433;letter-spacing:0.28px;">sensor.id.keyword: ...</div>
<div class="t " style="left:710.5px;top:1813.4px;font-size:22px;line-height:22px;font-weight:700;color:#1d2433;letter-spacing:0.6px;">Count</div>
<div class="r" style="left:450.5px;top:1853.0px;width:501.0px;height:3.0px;background:#1d2433;"></div>
<div class="t " style="left:460.5px;top:1872.9px;font-size:22px;line-height:22px;font-weight:400;color:#1d2433;letter-spacing:0.08px;">HWY_20_AND_LOC...</div>
<div class="t " style="left:712.0px;top:1872.9px;font-size:22px;line-height:22px;font-weight:400;color:#1d2433;letter-spacing:1.45px;">1,084</div>
<div class="r" style="left:977.0px;top:1691.5px;width:687.0px;height:238.5px;background:#ffffff;border:1.2px solid #d0d7e3;border-radius:6px;box-sizing:border-box;"></div>
<div class="t " style="left:989.0px;top:1700.1px;font-size:23px;line-height:23px;font-weight:700;color:#1d2433;letter-spacing:-0.02px;">Vehicle Speed (miles/hour)</div>
<svg class="r" style="left:0;top:0" width="3024" height="1898"><path d="M1211.80 2040.00 L1211.80 1840.00 A200 200 0 0 1 1311.80 2213.21 Z" fill="#ae5bb8" stroke="#fff" stroke-width="1.4" stroke-linejoin="round"/><path d="M1211.80 2040.00 L1311.80 2213.21 A200 200 0 0 1 1083.24 2193.21 Z" fill="#d6a163" stroke="#fff" stroke-width="1.4" stroke-linejoin="round"/><path d="M1211.80 2040.00 L1083.24 2193.21 A200 200 0 0 1 1199.94 1840.35 Z" fill="#bfb055" stroke="#fff" stroke-width="1.4" stroke-linejoin="round"/><path d="M1211.80 2040.00 L1199.94 1840.35 A200 200 0 0 1 1209.36 1840.01 Z" fill="#4b55bd" stroke="#fff" stroke-width="1.4" stroke-linejoin="round"/><path d="M1211.80 2040.00 L1209.36 1840.01 A200 200 0 0 1 1211.63 1840.00 Z" fill="#d9a79d" stroke="#fff" stroke-width="1.4" stroke-linejoin="round"/><path d="M1174 1802.8 H1190 L1210.8 1823 V1839" fill="none" stroke="#1d2433" stroke-width="1.6"/><path d="M1189 1823 H1205 L1205.6 1839" fill="none" stroke="#1d2433" stroke-width="1.6"/></svg>
<div class="t " style="left:1014.5px;top:1792.6px;font-size:18px;line-height:18px;font-weight:400;color:#1d2433;letter-spacing:0.1px;">≥ 75 and...&nbsp;&nbsp;0.12%</div>
<div class="t " style="left:1008.5px;top:1813.8px;font-size:18px;line-height:18px;font-weight:400;color:#1d2433;letter-spacing:0.1px;">≥ 60 and &lt;...&nbsp;&nbsp;0.79%</div>
<div class="r" style="left:1444.8px;top:1757.0px;width:13.4px;height:13.4px;background:#ae5bb8;border-radius:50%;"></div>
<div class="t " style="left:1470.5px;top:1754.0px;font-size:20px;line-height:20px;font-weight:400;color:#1d2433;letter-spacing:0.15px;">≥ 0 and &lt; 15</div>
<div class="r" style="left:1444.8px;top:1792.3px;width:13.4px;height:13.4px;background:#9a3d3d;border-radius:50%;"></div>
<div class="t " style="left:1470.5px;top:1789.3px;font-size:20px;line-height:20px;font-weight:400;color:#1d2433;letter-spacing:0.15px;">≥ 15 and &lt; 30</div>
<div class="r" style="left:1444.8px;top:1827.6px;width:13.4px;height:13.4px;background:#d6a163;border-radius:50%;"></div>
<div class="t " style="left:1470.5px;top:1824.6px;font-size:20px;line-height:20px;font-weight:400;color:#1d2433;letter-spacing:0.15px;">≥ 30 and &lt; 45</div>
<div class="r" style="left:1444.8px;top:1863.0px;width:13.4px;height:13.4px;background:#bfb055;border-radius:50%;"></div>
<div class="t " style="left:1470.5px;top:1860.0px;font-size:20px;line-height:20px;font-weight:400;color:#1d2433;letter-spacing:0.15px;">≥ 45 and &lt; 60</div>
<div class="r" style="left:1444.8px;top:1898.3px;width:13.4px;height:13.4px;background:#4b55bd;border-radius:50%;"></div>
<div class="t " style="left:1470.5px;top:1895.3px;font-size:20px;line-height:20px;font-weight:400;color:#1d2433;letter-spacing:0.15px;">≥ 60 and &lt; 75</div>
<div class="r" style="left:1677.0px;top:1691.5px;width:688.0px;height:238.5px;background:#ffffff;border:1.2px solid #d0d7e3;border-radius:6px;box-sizing:border-box;"></div>
<div class="t " style="left:1689.5px;top:1700.1px;font-size:23px;line-height:23px;font-weight:700;color:#1d2433;letter-spacing:0.05px;">Vehicle Distance (meters)</div>
<svg class="r" style="left:0;top:0" width="3024" height="1898"><path d="M1905.30 2042.80 L1905.30 1828.10 A214.7 214.7 0 0 1 2012.65 2228.74 Z" fill="#62abbb" stroke="#fff" stroke-width="2" stroke-linejoin="round"/><path d="M1905.30 2042.80 L2012.65 2228.74 A214.7 214.7 0 0 1 1703.55 2116.23 Z" fill="#84c04e" stroke="#fff" stroke-width="2" stroke-linejoin="round"/><path d="M1905.30 2042.80 L1703.55 2116.23 A214.7 214.7 0 0 1 1905.30 1828.10 Z" fill="#4a66b8" stroke="#fff" stroke-width="2" stroke-linejoin="round"/></svg>
<div class="r" style="left:2133.1px;top:1757.0px;width:13.4px;height:13.4px;background:#62abbb;border-radius:50%;"></div>
<div class="t " style="left:2159.0px;top:1754.0px;font-size:20px;line-height:20px;font-weight:400;color:#1d2433;letter-spacing:0.15px;">≥ 0 and &lt; 25</div>
<div class="r" style="left:2133.1px;top:1792.3px;width:13.4px;height:13.4px;background:#84c04e;border-radius:50%;"></div>
<div class="t " style="left:2159.0px;top:1789.3px;font-size:20px;line-height:20px;font-weight:400;color:#1d2433;letter-spacing:0.15px;">≥ 25 and &lt; 50</div>
<div class="r" style="left:2133.1px;top:1827.6px;width:13.4px;height:13.4px;background:#7e43c0;border-radius:50%;"></div>
<div class="t " style="left:2159.0px;top:1824.6px;font-size:20px;line-height:20px;font-weight:400;color:#1d2433;letter-spacing:0.15px;">≥ 50 and &lt; 75</div>
<div class="r" style="left:2133.1px;top:1863.0px;width:13.4px;height:13.4px;background:#b94aa8;border-radius:50%;"></div>
<div class="t " style="left:2159.0px;top:1860.0px;font-size:20px;line-height:20px;font-weight:400;color:#1d2433;letter-spacing:0.15px;">≥ 75 and &lt; 100</div>
<div class="r" style="left:2133.1px;top:1898.3px;width:13.4px;height:13.4px;background:#4a66b8;border-radius:50%;"></div>
<div class="t " style="left:2159.0px;top:1895.3px;font-size:20px;line-height:20px;font-weight:400;color:#1d2433;letter-spacing:0.15px;">≥ 100 and &lt; 125</div>
<div class="r" style="left:2377.0px;top:1691.5px;width:635.5px;height:238.5px;background:#ffffff;border:1.2px solid #d0d7e3;border-radius:6px;box-sizing:border-box;"></div>
<div class="t " style="left:2390.0px;top:1700.3px;font-size:23px;line-height:23px;font-weight:700;color:#1d2433;letter-spacing:-0.15px;">Direction</div>
<svg class="r" style="left:0;top:0" width="3024" height="1898"><path d="M2643.50 2041.70 L2643.50 1791.20 A250.5 250.5 0 0 1 2687.00 2288.39 Z" fill="#4aa398" stroke="#fff" stroke-width="2" stroke-linejoin="round"/><path d="M2643.50 2041.70 L2687.00 2288.39 A250.5 250.5 0 0 1 2396.81 2085.20 Z" fill="#78c17a" stroke="#fff" stroke-width="2" stroke-linejoin="round"/><path d="M2643.50 2041.70 L2396.81 2085.20 A250.5 250.5 0 0 1 2517.12 1825.42 Z" fill="#7489d3" stroke="#fff" stroke-width="2" stroke-linejoin="round"/><path d="M2643.50 2041.70 L2517.12 1825.42 A250.5 250.5 0 0 1 2643.50 1791.20 Z" fill="#5f3fb1" stroke="#fff" stroke-width="2" stroke-linejoin="round"/><path d="M2557.5 1782.8 H2573 L2578 1798" fill="none" stroke="#1d2433" stroke-width="1.6"/><path d="M2431.5 1858.8 H2448 L2459 1869.5" fill="none" stroke="#1d2433" stroke-width="1.6"/></svg>
<div class="t " style="left:2470.0px;top:1772.8px;font-size:18px;line-height:18px;font-weight:400;color:#1d2433;letter-spacing:0.2px;">S&nbsp;&nbsp;8.42%</div>
<div class="t " style="left:2391.0px;top:1848.8px;font-size:18px;line-height:18px;font-weight:400;color:#1d2433;letter-spacing:0.2px;">2%</div>
<div class="r" style="left:2906.8px;top:1757.0px;width:13.4px;height:13.4px;background:#4aa398;border-radius:50%;"></div>
<div class="t " style="left:2932.5px;top:1754.0px;font-size:20px;line-height:20px;font-weight:400;color:#1d2433;letter-spacing:0.15px;">W</div>
<div class="r" style="left:2906.8px;top:1792.0px;width:13.4px;height:13.4px;background:#78c17a;border-radius:50%;"></div>
<div class="t " style="left:2932.5px;top:1789.0px;font-size:20px;line-height:20px;font-weight:400;color:#1d2433;letter-spacing:0.15px;">E</div>
<div class="r" style="left:2906.8px;top:1827.9px;width:13.4px;height:13.4px;background:#7489d3;border-radius:50%;"></div>
<div class="t " style="left:2932.5px;top:1824.9px;font-size:20px;line-height:20px;font-weight:400;color:#1d2433;letter-spacing:0.15px;">N</div>
<div class="r" style="left:2906.8px;top:1862.3px;width:13.4px;height:13.4px;background:#5f3fb1;border-radius:50%;"></div>
<div class="t " style="left:2932.5px;top:1859.3px;font-size:20px;line-height:20px;font-weight:400;color:#1d2433;letter-spacing:0.15px;">S</div>

</body></html>
